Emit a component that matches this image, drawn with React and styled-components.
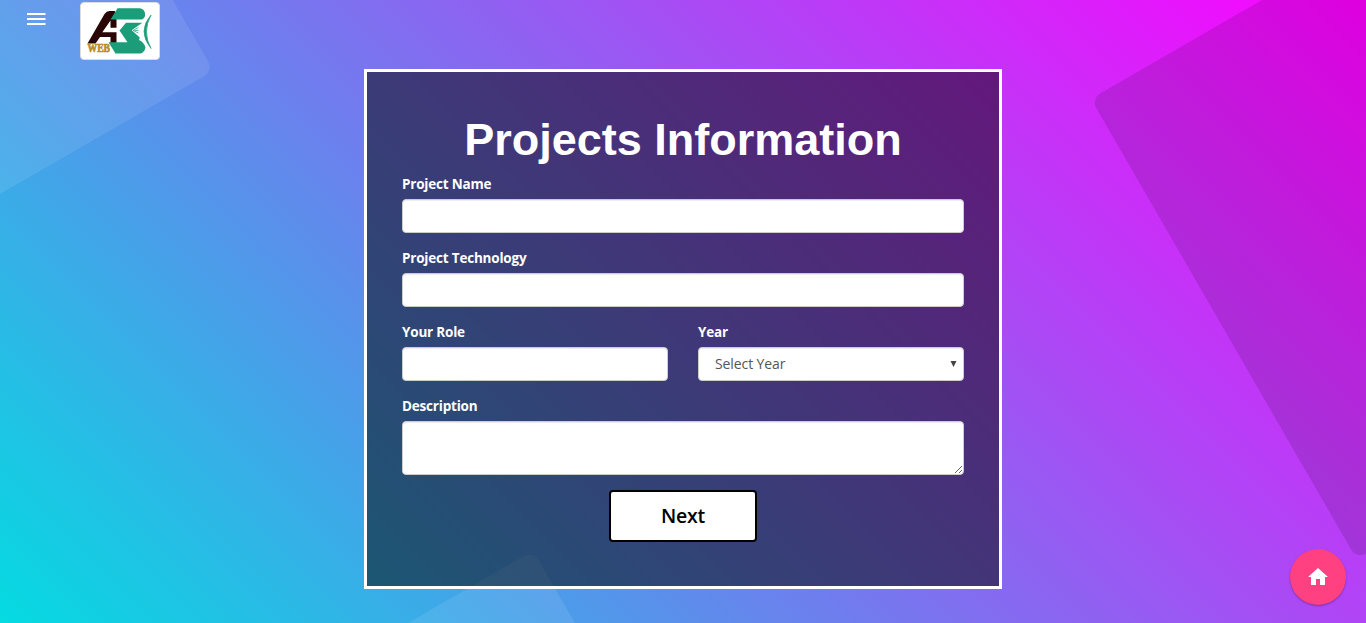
import React from 'react';
import styled, { createGlobalStyle } from 'styled-components';

const GlobalStyle = createGlobalStyle`
  *, *::before, *::after { box-sizing: border-box; }
  html, body { margin: 0; height: 100%; overflow: hidden; }
  body { font-family: 'Trebuchet MS', 'Open Sans', sans-serif; font-size: 14px; line-height: 20px; }
`;

const Page = styled.div`
  position: relative;
  display: flex;
  flex-direction: column;
  height: 623px;
  overflow: hidden;
  background: linear-gradient(45deg, #04dbe1, #ff00ff);
`;

const Backdrop = styled.svg`
  position: absolute;
  inset: 0;
  width: 1366px;
  height: 623px;
`;

const TopBar = styled.header`
  position: relative;
  display: flex;
  align-items: flex-start;
  gap: 32px;
  height: 69px;
  padding: 2px 24px;
`;

const MenuButton = styled.button`
  display: flex;
  margin: 5px 0 0;
  padding: 0;
  border: 0;
  background: none;
`;

const Logo = styled.div`
  display: flex;
  width: 80px;
  height: 58px;
  border: 1px solid #ddd;
  border-radius: 4px;
  background: #fff;
`;

const Card = styled.form`
  position: relative;
  align-self: center;
  display: flex;
  flex-direction: column;
  width: 638px;
  height: 520px;
  padding: 43px 35px 0;
  border: 3px solid #fff;
  background: rgba(0, 0, 0, 0.5);
`;

const Title = styled.h1`
  margin: 0 0 9px;
  font: bold 45px/50px 'Liberation Sans', Arial, sans-serif;
  text-align: center;
  white-space: nowrap;
  color: #fff;
`;

const Row = styled.div`
  display: grid;
  grid-template-columns: 1fr 1fr;
  gap: 30px;
`;

const Field = styled.label`
  display: flex;
  flex-direction: column;
  gap: 5px;
  margin-bottom: 15px;
`;

const LabelText = styled.span`
  font-weight: 700;
  font-size: 13.5px;
  letter-spacing: -0.2px;
  color: #fff;
`;

const Input = styled.input`
  width: 100%;
  height: 34px;
  padding: 6px 12px;
  border: 1px solid #ccc;
  border-radius: 4px;
  background: #fff;
  box-shadow: inset 0 1px 1px rgba(0, 0, 0, 0.075);
`;

const TextArea = styled(Input).attrs({ as: 'textarea' })`
  display: block;
  height: 54px;
  resize: vertical;
`;

const Select = styled(Input).attrs({ as: 'div' })`
  display: flex;
  align-items: center;
  justify-content: space-between;
  padding: 0 6px 0 16px;
  font-size: 14px;
  letter-spacing: -0.1px;
  color: #555;
`;

const NextButton = styled.button`
  align-self: center;
  width: 148px;
  height: 52px;
  padding: 0;
  border: 2px solid #000;
  border-radius: 4px;
  background: #fff;
  font: 600 19.5px/28px 'Trebuchet MS', 'Open Sans', sans-serif;
  letter-spacing: -0.2px;
  color: #000;
`;

const HomeButton = styled.button`
  position: absolute;
  right: 20px;
  bottom: 18px;
  display: flex;
  align-items: center;
  justify-content: center;
  width: 56px;
  height: 56px;
  padding: 0;
  border: 0;
  border-radius: 50%;
  background: #ff4081;
  box-shadow: 0 1px 2px rgba(0, 0, 0, 0.3);
`;

export default function App() {
  return (
    <Page>
      <GlobalStyle />
      <Backdrop viewBox="0 0 1366 623" aria-hidden="true">
        <rect width="700" height="700" x="-700" y="-700" rx="11" fill="#fff" fillOpacity=".09" transform="translate(213.6 70.8) rotate(-30)" />
        <rect width="600" height="531.6" rx="11" fill="#000" fillOpacity=".12" transform="translate(1090.9 98.8) rotate(-30)" />
        <rect width="400" height="400" x="-400" rx="11" fill="#fff" fillOpacity=".09" transform="translate(533.2 550.7) rotate(-30)" />
      </Backdrop>
      <TopBar>
        <MenuButton type="button" aria-label="Menu">
          <svg width="24" height="24" viewBox="0 0 24 24">
            <path d="M3 6h18.500v2H3zM3 11h18.500v2H3zM3 16h18.500v2H3z" fill="#fff" />
          </svg>
        </MenuButton>
        <Logo>
          <svg width="78" height="56" viewBox="81 3 78 56">
            <path d="M109.500 11H114.500L116.500 13V27.800H110.500V20.500L102.300 32.300H116.500V43H110.500V37H100L95.500 43.500H87.500L104.500 14Q106.500 11 109.500 11z" fill="#2a0505" />
            <path d="M117.500 8.300H140Q145 9.500 145 14V16Q144.500 18.500 142 19.500H110.500z" fill="#1c9d7a" />
            <path d="M126 22.800H142.300L131.700 30.300L139.800 37.500L139 40Q144 42 145.500 47.500Q144.500 52 141 53.500H115.500L108.500 42.200H127.500L119.500 30.500z" fill="#1c9d7a" />
            <path d="M138.500 27.500L133 30.500l5.500 2.500M138.500 30.500h-4" fill="none" stroke="#1c9d7a" strokeWidth=".7" />
            <path d="M151 15q-14 16 0 33.500-9-16.500 0-33.500z" fill="#1c9d7a" stroke="#1c9d7a" strokeWidth=".7" />
            <text x="87.500" y="52" fill="#b98d25" stroke="#b98d25" strokeWidth=".7" fontFamily="Liberation Serif, serif" fontWeight="700" fontSize="12" textLength="22.500" lengthAdjust="spacingAndGlyphs">WEB</text>
          </svg>
        </Logo>
      </TopBar>
      <Card onSubmit={(e) => e.preventDefault()}>
        <Title>Projects Information</Title>
        <Field>
          <LabelText>Project Name</LabelText>
          <Input />
        </Field>
        <Field>
          <LabelText>Project Technology</LabelText>
          <Input />
        </Field>
        <Row>
          <Field>
            <LabelText>Your Role</LabelText>
            <Input />
          </Field>
          <Field>
            <LabelText>Year</LabelText>
            <Select>
              Select Year
              <svg width="7" height="9" viewBox="0 0 7 9">
                <path d="M0.500 1h6L3.500 7z" fill="#444" />
              </svg>
            </Select>
          </Field>
        </Row>
        <Field as="div">
          <LabelText>Description</LabelText>
          <TextArea aria-label="Description" />
        </Field>
        <NextButton type="submit">Next</NextButton>
      </Card>
      <HomeButton type="button" aria-label="Home">
        <svg width="24" height="24" viewBox="0 0 24 24">
          <path d="M10 20v-6h4v6h5v-8h3L12 3 2 12h3v8z" fill="#fff" />
        </svg>
      </HomeButton>
    </Page>
  );
}
